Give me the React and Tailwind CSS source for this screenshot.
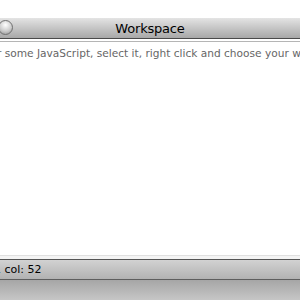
import React from "react";

const App = () => {
  return (
    <div className="w-[300px] h-[300px] overflow-hidden bg-white flex flex-col font-['Lucida_Grande','DejaVu_Sans',sans-serif]">
      <div className="h-[18px] bg-white" />

      {/* Title bar */}
      <div className="h-[20px] relative flex items-center justify-center bg-gradient-to-b from-[#e4e4e4] to-[#a8a8a8]">
        <div className="absolute left-[-2px] top-[2px] w-[15px] h-[15px] rounded-full border border-[#707070] bg-[radial-gradient(circle_at_50%_30%,#ffffff,#cccccc_55%,#8e8e8e)]" />
        <span className="text-[13px] text-black leading-none tracking-[-0.2px]">Workspace</span>
      </div>
      <div className="h-[1px] bg-[#4a4a4a]" />
      <div className="h-[2px] bg-white" />
      <div className="h-[1px] bg-[#b5b5b5]" />

      {/* Editor */}
      <div className="flex-1 bg-white overflow-hidden">
        <p className="ml-[-3px] mt-[6px] whitespace-nowrap text-[10.6px] text-[#666666] leading-none">
          r some JavaScript, select it, right click and choose your workspace
        </p>
      </div>

      <div className="h-[1px] bg-[#e0e0e0]" />
      <div className="h-[3px] bg-[#f4f4f4]" />
      <div className="h-[1px] bg-[#555555]" />

      {/* Status bar */}
      <div className="h-[19px] flex items-center bg-gradient-to-b from-[#d2d2d2] to-[#b2b2b2]">
        <span className="ml-[-6px] whitespace-nowrap text-[11px] text-black leading-none">1 col: 52</span>
      </div>
      <div className="h-[1px] bg-[#5e5e5e]" />
      <div className="h-[20px] bg-gradient-to-b from-[#a6a6a6] to-[#c6c6c6]" />
    </div>
  );
};

export default App;
